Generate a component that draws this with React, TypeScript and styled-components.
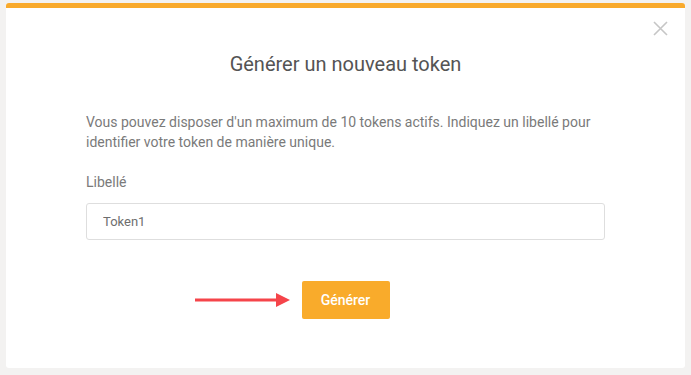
import React from "react";
import styled, { createGlobalStyle } from "styled-components";

const Global = createGlobalStyle`
  html, body { margin: 0; padding: 0; background: #f3f2f1; }
  body { font-family: Roboto, "Liberation Sans", Arial, sans-serif; }
  * { box-sizing: border-box; }
`;

const Page = styled.div`
  width: 691px;
  height: 375px;
  padding: 3px 6px 0 6px;
  background: #f3f2f1;
  overflow: hidden;
`;

const Modal = styled.div`
  position: relative;
  width: 679px;
  height: 365px;
  background: #ffffff;
  border-top: 5px solid #f9aa2c;
  border-radius: 3px;
  padding: 44px 80px 0 80px;
  display: flex;
  flex-direction: column;
`;

const Close = styled.button`
  position: absolute;
  top: 13px;
  right: 17px;
  width: 15px;
  height: 15px;
  padding: 0;
  border: none;
  background: transparent;
  display: flex;
`;

const Title = styled.h2`
  margin: 0;
  font-size: 20px;
  line-height: 24px;
  font-weight: 400;
  color: #545454;
  text-align: center;
`;

const Text = styled.p`
  margin: 36px 0 0 0;
  font-size: 14px;
  line-height: 20px;
  color: #7a7a7a;
`;

const Label = styled.label`
  margin-top: 20px;
  font-size: 14px;
  line-height: 20px;
  color: #7a7a7a;
`;

const Input = styled.input`
  margin-top: 11px;
  height: 37px;
  width: 100%;
  border: 1px solid #dedede;
  border-radius: 3px;
  padding: 0 16px;
  font-family: Roboto, "Liberation Sans", Arial, sans-serif;
  font-size: 13px;
  color: #6e6e6e;
  outline: none;
`;

const Actions = styled.div`
  margin-top: 41px;
  display: flex;
  justify-content: center;
`;

const ButtonWrap = styled.div`
  position: relative;
`;

const Button = styled.button`
  width: 88px;
  height: 38px;
  border: none;
  border-radius: 2px;
  background: #f9ab2b;
  color: #ffffff;
  font-family: Roboto, "Liberation Sans", Arial, sans-serif;
  font-size: 14px;
  font-weight: 500;
`;

const Arrow = styled.svg`
  position: absolute;
  left: -107px;
  top: 11px;
`;

export default function App() {
  return (
    <>
      <Global />
      <Page>
        <Modal>
          <Close aria-label="Fermer">
            <svg width="15" height="15" viewBox="0 0 15 15">
              <path d="M1 1 L14 14 M14 1 L1 14" stroke="#c6c6c6" strokeWidth="1.6" />
            </svg>
          </Close>
          <Title>Générer un nouveau token</Title>
          <Text>
            Vous pouvez disposer d'un maximum de 10 tokens actifs. Indiquez un libellé pour
            identifier votre token de manière unique.
          </Text>
          <Label>Libellé</Label>
          <Input defaultValue="Token1" />
          <Actions>
            <ButtonWrap>
              <Arrow width="96" height="16" viewBox="0 0 96 16">
                <rect x="0" y="6.5" width="82" height="3" fill="#f5444a" />
                <polygon points="81,1 95,8 81,15" fill="#f5444a" />
              </Arrow>
              <Button>Générer</Button>
            </ButtonWrap>
          </Actions>
        </Modal>
      </Page>
    </>
  );
}
